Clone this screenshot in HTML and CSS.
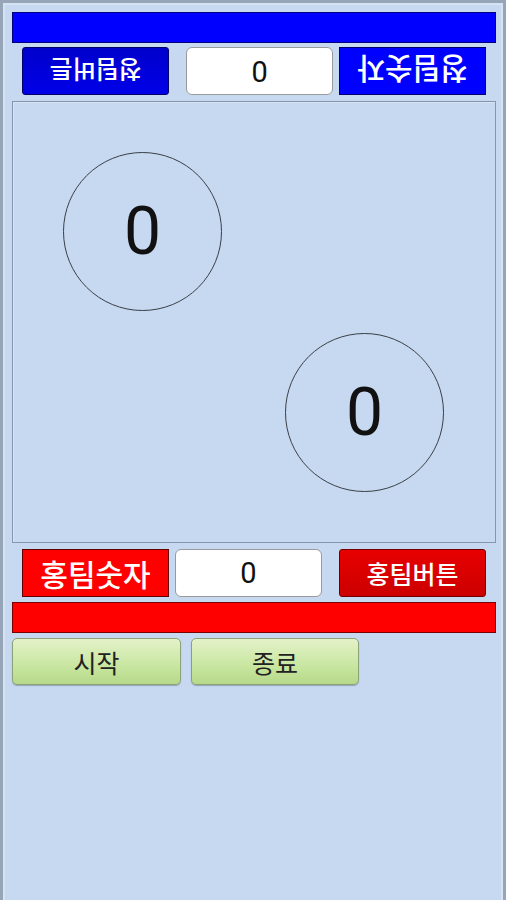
FILE: index.html
```html
<!DOCTYPE html>
<html lang="ko">
<head>
    <meta charset="UTF-8">
    <meta name="viewport" content="width=device-width, initial-scale=1.0">
    <title>청팀 홍팀</title>
    <link rel="stylesheet" href="styles.css">
</head>
<body>

<div class="screen">
    <div class="bar bar-blue"></div>

    <!-- blue side faces the other player, so the row is turned around -->
    <div class="team-row team-blue">
        <div class="team-label">청팀숫자</div>
        <div class="team-count">0</div>
        <button class="team-button">청팀버튼</button>
    </div>

    <div class="field">
        <div class="puck puck-blue">0</div>
        <div class="puck puck-red">0</div>
    </div>

    <div class="team-row team-red">
        <div class="team-label">홍팀숫자</div>
        <div class="team-count">0</div>
        <button class="team-button">홍팀버튼</button>
    </div>

    <div class="bar bar-red"></div>

    <div class="controls">
        <button class="control">시작</button>
        <button class="control">종료</button>
    </div>
</div>

</body>
</html>
```

FILE: styles.css
```css
body {
    margin: 0;
    font-family: Roboto, "Noto Sans CJK KR", sans-serif;
    background-color: #c6d9f0;
}
.screen {
    box-sizing: border-box;
    width: 506px;
    height: 900px;
    border: 3px solid #97a5b8;
    border-bottom: none;
    box-shadow: inset 2px 2px 0 #d6e3f2, inset -2px 0 0 #d6e3f2;
    background-color: #c6d9f0;
    padding: 9px 7px 0 9px;
}
.bar {
    box-sizing: border-box;
    height: 31px;
}
.bar-blue {
    background-color: #0000ff;
    border: 1px solid #00007a;
}
.bar-red {
    background-color: #ff0000;
    border: 1px solid #7a0000;
}
.team-row {
    display: flex;
    align-items: center;
    padding: 6px 10px 5px 10px;
}
.team-blue {
    transform: rotate(180deg);
    padding: 5px 10px 4px 10px;
}
.team-label, .team-count, .team-button {
    box-sizing: border-box;
    height: 48px;
    width: 147px;
    display: flex;
    align-items: center;
    justify-content: center;
    font-family: Roboto, "Noto Sans CJK KR", sans-serif;
}
.team-label {
    font-size: 30px;
    font-weight: 500;
    color: #fff;
    border: 1px solid #600000;
}
.team-count {
    margin-left: 6px;
    background-color: #fff;
    border: 1px solid #9a9a9a;
    border-radius: 6px;
    font-size: 29px;
    color: #111;
}
.team-button {
    margin-left: auto;
    font-size: 25px;
    font-weight: 500;
    color: #fff;
    border-radius: 3px;
    padding: 0;
    cursor: pointer;
}
.team-red .team-label {
    background-color: #ff0000;
}
.team-red .team-button {
    background: linear-gradient(#e80000, #cc0000);
    border: 1px solid #700000;
}
.team-blue .team-label {
    background-color: #0000ff;
    border-color: #00006a;
}
.team-blue .team-button {
    background: linear-gradient(#0000e8, #0000cc);
    border: 1px solid #00006a;
}
.field {
    position: relative;
    box-sizing: border-box;
    height: 442px;
    margin-top: 1px;
    border: 1px solid #8595ab;
    box-shadow: inset 1px 1px 0 #d8e4f3;
}
.puck {
    position: absolute;
    box-sizing: border-box;
    width: 159px;
    height: 159px;
    border: 1px solid #3a3f48;
    border-radius: 50%;
    display: flex;
    align-items: center;
    justify-content: center;
    font-size: 66px;
    color: #111;
}
.puck-blue {
    left: 50px;
    top: 50px;
}
.puck-red {
    left: 272px;
    top: 231px;
}
.controls {
    display: flex;
    margin-top: 5px;
}
.control {
    box-sizing: border-box;
    width: 169px;
    height: 47px;
    margin-right: 10px;
    background: linear-gradient(#e4f2c8, #c8e6a0 60%, #b6d98a);
    border: 1px solid #8ca37a;
    border-radius: 5px;
    box-shadow: 0 1px 1px rgba(0, 0, 0, 0.25);
    font-family: Roboto, "Noto Sans CJK KR", sans-serif;
    font-size: 25px;
    color: #222;
    cursor: pointer;
}
.control + .control {
    width: 168px;
}
```
